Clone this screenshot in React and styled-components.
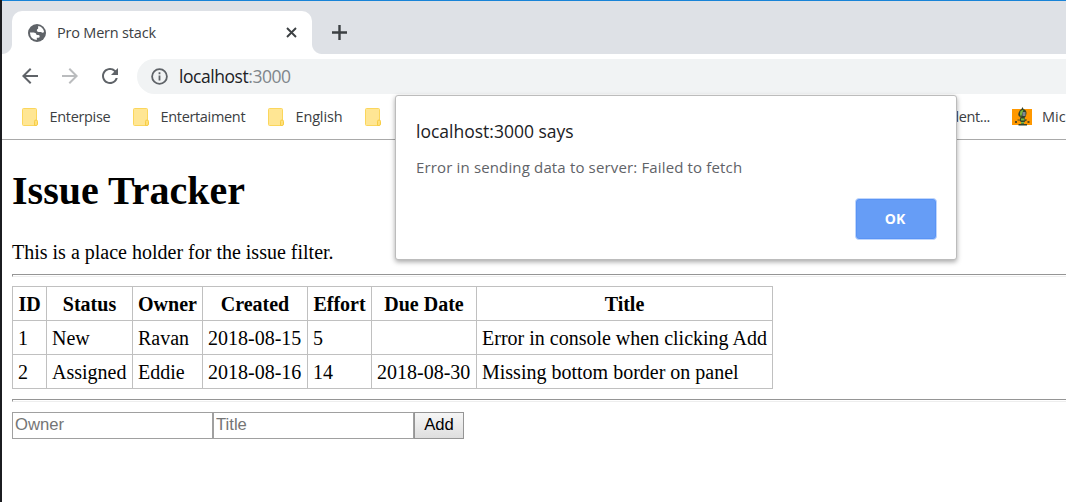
import React from 'react';
import styled, { createGlobalStyle } from 'styled-components';
import { MdArrowBack, MdArrowForward, MdRefresh } from 'react-icons/md';

const Global = createGlobalStyle`
  * { box-sizing: border-box; }
  body { margin: 0; background: #fff; overflow: hidden; }
`;

const Window = styled.div`
  position: relative;
  width: 1066px;
  height: 502px;
  overflow: hidden;
  border-left: 2px solid #1b1c20;
  background: #fff;
  font-family: 'Open Sans', 'Noto Sans', sans-serif;
`;

const TabStrip = styled.div`
  display: flex;
  align-items: flex-end;
  height: 54px;
  padding-left: 10px;
  border-top: 1px solid #1883d7;
  background: #dee1e6;
`;

const Tab = styled.div`
  position: relative;
  display: flex;
  align-items: center;
  width: 300px;
  height: 43px;
  padding: 0 15px 0 16px;
  border-radius: 10px 10px 0 0;
  background: #fff;
  color: #5f6368;
  &::before, &::after {
    content: '';
    position: absolute;
    bottom: 0;
    width: 10px;
    height: 10px;
  }
  &::before {
    left: -10px;
    background: radial-gradient(circle at 0 0, transparent 9.5px, #fff 10.5px);
  }
  &::after {
    right: -10px;
    background: radial-gradient(circle at 100% 0, transparent 9.5px, #fff 10.5px);
  }
`;

const Label = styled.span`
  font-size: ${(p) => p.$size || 14.5}px;
  letter-spacing: ${(p) => p.$track || 0}px;
  color: ${(p) => p.$color || '#3c4043'};
  white-space: nowrap;
  line-height: 24px;
`;

const TabTitle = styled(Label)`
  flex: 1;
  margin-left: 11px;
`;

const NewTab = styled.div`
  display: flex;
  align-items: center;
  height: 43px;
  margin-left: 20px;
`;

const Toolbar = styled.div`
  display: flex;
  align-items: center;
  height: 45px;
  padding-left: 16px;
  color: #5f6368;
`;

const ToolIcon = styled.div`
  display: flex;
  width: 40px;
  padding-bottom: 2px;
  color: ${(p) => (p.$muted ? '#babcbe' : '#5f6368')};
`;

const AddressBar = styled.div`
  display: flex;
  align-items: center;
  flex: 1;
  height: 35px;
  margin-left: -1px;
  padding: 0 0 1px 14px;
  border-radius: 18px 0 0 18px;
  background: #f1f3f4;
`;

const Url = styled(Label)`
  margin-left: 11px;
  padding-bottom: 1px;
  em { font-style: normal; color: #80868b; }
`;

const BookmarkBar = styled.div`
  display: flex;
  align-items: center;
  height: 41px;
  padding: 0 0 5px 20px;
  border-bottom: 1px solid #a9a9a9;
`;

const Bookmark = styled.div`
  display: flex;
  flex: none;
  align-items: center;
  width: ${(p) => p.$width}px;
  svg { flex: none; margin-right: ${(p) => p.$gap || 11.5}px; }
`;

const BookmarkSpacer = styled.div`
  flex: none;
  width: ${(p) => p.$width}px;
  padding-right: 22px;
  text-align: right;
  line-height: 24px;
`;

const Page = styled.main`
  padding: 28px 0 0 10px;
  font: 20px/23px 'Liberation Serif', serif;
  color: #000;
`;

const Heading = styled.h1`
  margin: 0 0 27px;
  font-size: 40px;
  line-height: 46px;
`;

const Rule = styled.div`
  height: 3px;
  margin: ${(p) => p.$margin};
  border-top: 1px solid #959595;
  border-left: 1px solid #959595;
  border-bottom: 1px solid #eee;
`;

const IssueTable = styled.table`
  width: 761px;
  table-layout: fixed;
  border-collapse: collapse;
  th, td {
    height: 34px;
    padding: 6px 5px 4px;
    border: 1px solid #c0c0c0;
    white-space: nowrap;
    line-height: 23px;
    text-align: left;
  }
  th { text-align: center; }
`;

const Col = styled.col`
  width: ${(p) => p.$width}px;
`;

const Form = styled.form`
  display: flex;
`;

const Field = styled.input`
  width: 201px;
  height: 27px;
  margin: 0;
  padding: 0 2px 1px;
  border: 1px solid #a0a0a0;
  border-radius: 0;
  font: 16.67px 'Liberation Sans', sans-serif;
  &::placeholder { color: #757575; opacity: 1; }
`;

const AddButton = styled.button`
  width: 50px;
  height: 27px;
  margin: 0;
  padding: 0 0 2px;
  border: 1px solid #959595;
  border-radius: 0;
  background: linear-gradient(#f6f6f6, #dedede);
  font: 16.67px 'Liberation Sans', sans-serif;
  color: #000;
`;

const Dialog = styled.div`
  position: absolute;
  left: 393px;
  top: 95px;
  display: flex;
  flex-direction: column;
  width: 562px;
  height: 165px;
  padding: 23px 19px 19px 20px;
  border: 1px solid #bcbcbc;
  border-radius: 3px;
  background: #fff;
  box-shadow: 0 2px 5px rgba(0, 0, 0, 0.35);
`;

const Message = styled(Label)`
  margin-top: 12px;
`;

const OkButton = styled.button`
  width: 82px;
  height: 42px;
  margin: auto 0 0 auto;
  padding: 0 2px 2px 0;
  border: 1px solid #bfd6fc;
  border-radius: 4px;
  background: #669df6;
  box-shadow: inset 0 0 0 1px #5a94f5;
  color: #fff;
  font: 700 14px 'Open Sans', sans-serif;
`;

const Globe = () => (
  <svg width="18" height="18" viewBox="0 0 18 18">
    <circle cx="9" cy="9" r="9" fill="#5f6368" />
    <path d="M10.2 2.1Q14.7 2.9 16 7.2q-.1 1.6-1.5 1.5l-1.6-.8H10.6q-1.8-.1-1.8-1.6.1-1.4 1.3-1.5z" fill="#fff" />
    <path d="M1.9 8.6h3.9q2.6.1 2.9 2.3h1.9q1.2.2 1.1 1.5-.1 1.2-1.4 1.3H8.8v2.3Q2.4 15.7 1.9 8.6z" fill="#fff" />
  </svg>
);

const Close = () => (
  <svg width="11" height="11" viewBox="0 0 11 11" fill="none" stroke="#3c4043" strokeWidth="1.9">
    <path d="M1 1l9 9M10 1l-9 9" />
  </svg>
);

const Plus = () => (
  <svg width="15" height="15" viewBox="0 0 15 15" fill="none" stroke="#3c4043" strokeWidth="2.4">
    <path d="M7.5 0v15M0 7.5h15" />
  </svg>
);

const Info = () => (
  <svg width="17" height="17" viewBox="0 0 17 17" fill="none" stroke="#5f6368" strokeWidth="1.8">
    <circle cx="8.5" cy="8.5" r="7.4" />
    <path d="M8.5 7.6v5M8.5 4.3v1.9" />
  </svg>
);

const Folder = () => (
  <svg width="16" height="18" viewBox="0 0 16 18">
    <rect x="0.5" y="0.5" width="14" height="17" rx="1" fill="#ffe694" stroke="#fbd65c" />
    <path d="M12.5 17.5v-4.2q0-1.3 1.5-1.3t1.5 1.3v2.7q0 1.5-1.5 1.5z" fill="#ffe07a" stroke="#f7cd45" />
  </svg>
);

const Robot = () => (
  <svg width="20" height="20" viewBox="0 0 20 20">
    <path d="M0 2h20v16H0z" fill="#ff9800" />
    <path d="M10.500 0l1 2q3 1 3 4t-2 5l1.500 2.500-2 2v1.500h3v1.500H6.500v-1.500h2.500l.5-1.500-2-2 1-3.500Q5.500 9 6.500 6t3-4z" fill="#33422b" />
    <path d="M8.500 4q-1.500 3 .5 6l1.500-4.500 1-3zM9 11.500h3.500v2H9zM9 15h3v1.500H9z" fill="#79b942" />
    <path d="M10.500 5h3v4h-3z" fill="#7e8991" />
    <path d="M3 14h2v2H3zM15.500 14h2v2h-2zM5.500 12.500h2v1h-2zM13 12.500h2v1h-2z" fill="#5c4a18" />
  </svg>
);

const columns = [
  ['ID', 34], ['Status', 86], ['Owner', 70], ['Created', 105],
  ['Effort', 64], ['Due Date', 105], ['Title', 296],
];

const issues = [
  ['1', 'New', 'Ravan', '2018-08-15', '5', '', 'Error in console when clicking Add'],
  ['2', 'Assigned', 'Eddie', '2018-08-16', '14', '2018-08-30', 'Missing bottom border on panel'],
];

export default function App() {
  return (
    <Window>
      <Global />
      <TabStrip>
        <Tab>
          <Globe />
          <TabTitle $track={-0.2}>Pro Mern stack</TabTitle>
          <Close />
        </Tab>
        <NewTab><Plus /></NewTab>
      </TabStrip>
      <Toolbar>
        <ToolIcon><MdArrowBack size={24} /></ToolIcon>
        <ToolIcon $muted><MdArrowForward size={24} /></ToolIcon>
        <ToolIcon><MdRefresh size={24} /></ToolIcon>
        <AddressBar>
          <Info />
          <Url $size={17.5} $track={-0.45} $color="#202124">localhost<em>:3000</em></Url>
        </AddressBar>
      </Toolbar>
      <BookmarkBar>
        <Bookmark $width={111}><Folder /><Label $track={-0.33}>Enterpise</Label></Bookmark>
        <Bookmark $width={135}><Folder /><Label $track={-0.33}>Entertaiment</Label></Bookmark>
        <Bookmark $width={97}><Folder /><Label $track={-0.15}>English</Label></Bookmark>
        <Bookmark $width={16}><Folder /></Bookmark>
        <BookmarkSpacer $width={631}><Label $track={-0.4}>dent...</Label></BookmarkSpacer>
        <Bookmark $width={70} $gap={10}><Robot /><Label>Mic</Label></Bookmark>
      </BookmarkBar>
      <Page>
        <Heading>Issue Tracker</Heading>
        <div>This is a place holder for the issue filter.</div>
        <Rule $margin="10px 0 9px" />
        <IssueTable>
          <colgroup>{columns.map(([name, width]) => <Col key={name} $width={width} />)}</colgroup>
          <thead><tr>{columns.map(([name]) => <th key={name}>{name}</th>)}</tr></thead>
          <tbody>
            {issues.map((row) => (
              <tr key={row[0]}>{row.map((cell, i) => <td key={i}>{cell}</td>)}</tr>
            ))}
          </tbody>
        </IssueTable>
        <Rule $margin="10px 0 10px" />
        <Form>
          <Field placeholder="Owner" />
          <Field placeholder="Title" />
          <AddButton type="button">Add</AddButton>
        </Form>
      </Page>
      <Dialog>
        <Label $size={17.5} $track={0} $color="#202124">localhost:3000 says</Label>
        <Message $size={15} $track={0.15} $color="#5f6368">Error in sending data to server: Failed to fetch</Message>
        <OkButton>OK</OkButton>
      </Dialog>
    </Window>
  );
}
